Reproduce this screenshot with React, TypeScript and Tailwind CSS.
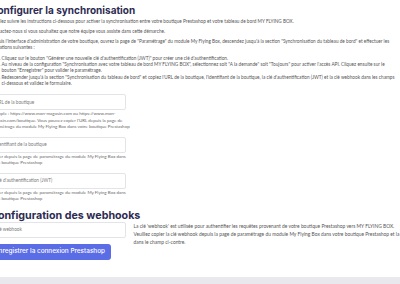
import React from "react";

const body = "font-['Lato',sans-serif]";
const head = "font-['Inter',sans-serif]";

function Field({ placeholder, help }: { placeholder: string; help: string[] }) {
  return (
    <div className="mb-[6px]">
      <div className="h-[16px] rounded-[2px] border border-[#e3e4e8] bg-white flex items-center pl-[4px] text-[4.7px] text-[#7a7a7a]">
        {placeholder}
      </div>
      <div className="mt-[1px] text-[4.5px] leading-[6.5px] text-[#6a6a6a] whitespace-nowrap">
        {help.map((l, i) => (
          <div key={i}>{l}</div>
        ))}
      </div>
    </div>
  );
}

export default function App() {
  return (
    <div className={`w-[400px] h-[284px] overflow-hidden bg-white flex flex-col ${body}`}>
      <div className="-ml-[10px] flex-1">
        <h1 className={`${head} mt-[4px] mb-[1.5px] text-[10px] leading-[12px] font-bold text-[#2d2b52] whitespace-nowrap`}>
          Configurer la synchronisation
        </h1>
        <div className="text-[4.7px] leading-[6.3px] text-[#555555] whitespace-nowrap">
          <p className="mb-[4px]">
            Veuillez suivre les instructions ci-dessous pour activer la synchronisation entre votre boutique Prestashop et votre tableau de bord MY FLYING BOX.
          </p>
          <p className="mb-[4px]">
            Contactez-nous si vous souhaitez que notre équipe vous assiste dans cette démarche.
          </p>
          <p className="mb-[4px]">
            Depuis l'interface d'administration de votre boutique, ouvrez la page de "Paramétrage" du module My Flying Box, descendez jusqu'à la section "Synchronisation du tableau de bord" et effectuer les
            <br />
            opérations suivantes :
          </p>
          <ol className="list-decimal pl-[11.5px]">
            <li>Cliquez sur le bouton "Générer une nouvelle clé d'authentification (JWT)" pour créer une clé d'authentification.</li>
            <li>
              Au niveau de la configuration "Synchronisation avec votre tableau de bord MY FLYING BOX", sélectionnez soit "A la demande" soit "Toujours" pour activer l'accès API. Cliquez ensuite sur le
              <br />
              bouton "Enregistrer" pour valider le paramétrage.
            </li>
            <li>
              Redescender jusqu'à la section "Synchronisation du tableau de bord" et copiez l'URL de la boutique, l'identifiant de la boutique, la clé d'authentification (JWT) et la clé webhook dans les champs
              <br />
              ci-dessous et validez le formulaire.
            </li>
          </ol>
        </div>

        <div className="w-[136px] mt-[8px]">
          <Field
            placeholder="URL de la boutique"
            help={[
              "Exemple : https://www.mon-magasin.com ou https://www.mon-",
              "magasin.com/boutique. Vous pouvez copier l'URL depuis la page de",
              "paramétrage du module My Flying Box dans votre boutique Prestashop",
            ]}
          />
          <Field
            placeholder="Identifiant de la boutique"
            help={[
              "Copier depuis la page de paramétrage du module My Flying Box dans",
              "votre boutique Prestashop",
            ]}
          />
          <Field
            placeholder="Clé d'authentification (JWT)"
            help={[
              "Copier depuis la page de paramétrage du module My Flying Box dans",
              "votre boutique Prestashop",
            ]}
          />
        </div>

        <h2 className={`${head} mt-[7px] text-[10.7px] leading-[12px] font-bold text-[#2d2b52] whitespace-nowrap`}>
          Configuration des webhooks
        </h2>
        <div className="flex gap-[7.5px]">
          <div className="w-[136px] shrink-0">
            <div className="h-[16px] rounded-[2px] border border-[#e3e4e8] bg-white flex items-center pl-[4px] text-[4.7px] text-[#7a7a7a]">
              Clé webhook
            </div>
            <button
              className={`${head} mt-[6px] h-[16.5px] w-[121px] rounded-[3px] bg-[#5a6ce6] text-white text-[6.4px] font-medium whitespace-nowrap flex items-center justify-end pr-[6px]`}
            >
              Enregistrer la connexion Prestashop
            </button>
          </div>
          <div className="text-[4.9px] leading-[8.3px] text-[#555555] whitespace-nowrap">
            <p>La clé 'webhook' est utilisée pour authentifier les requêtes provenant de votre boutique Prestashop vers MY FLYING BOX.</p>
            <p>
              Veuillez copier la clé webhook depuis la page de paramétrage du module My Flying Box dans votre boutique Prestashop et la coller
              <br />
              dans le champ ci-contre.
            </p>
          </div>
        </div>
      </div>
      <div className="h-[7px] bg-[#e8e8ed] shrink-0" />
    </div>
  );
}
